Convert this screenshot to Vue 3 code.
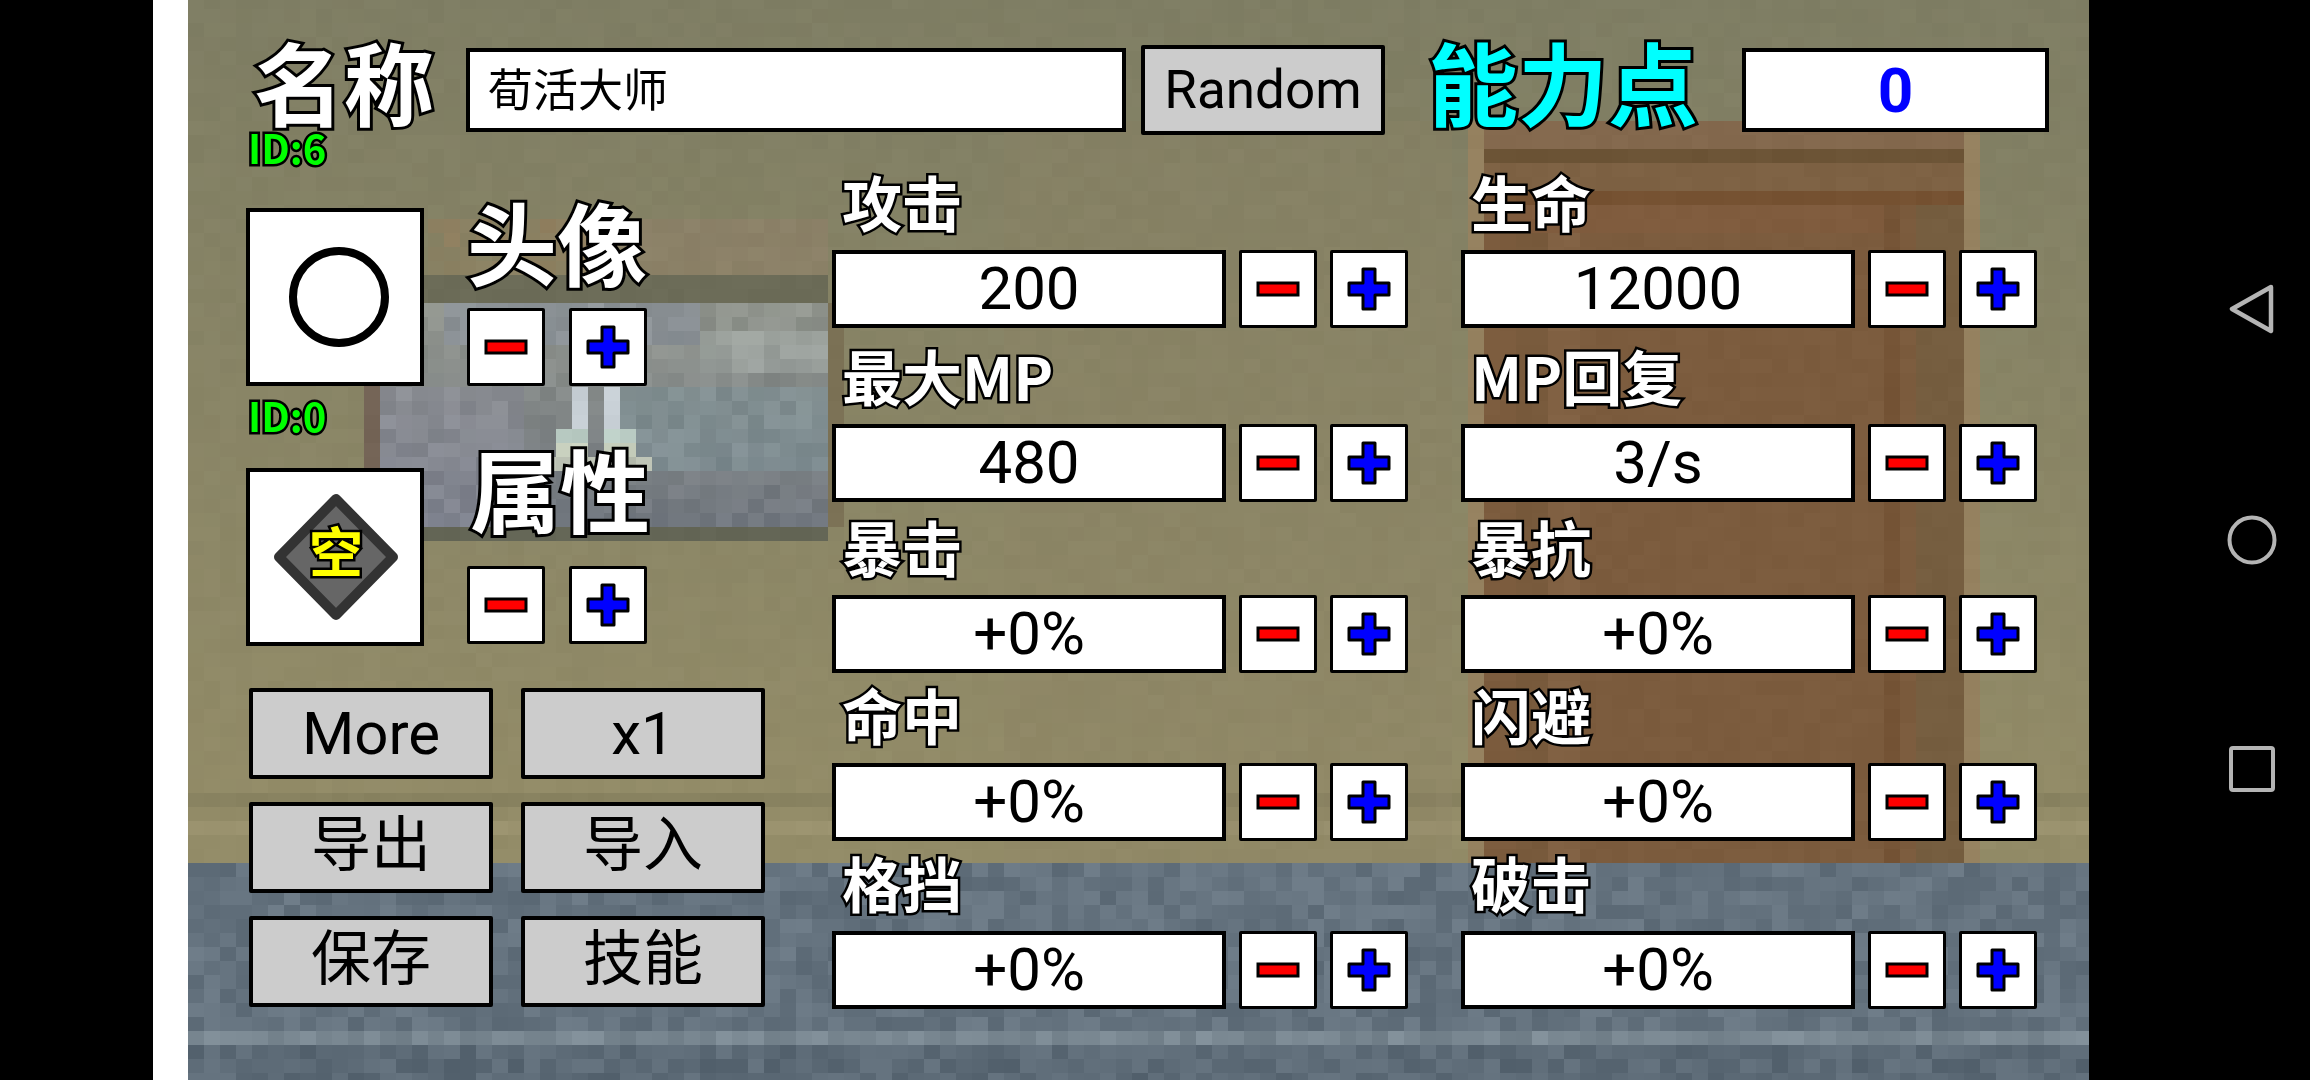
<template>
  <div class="screen">
    <div class="edge-black"></div>
    <div class="edge-white"></div>

    <main class="game">
      <canvas ref="bgCanvas" class="bg" width="119" height="78"></canvas>

      <div class="top-row">
        <div class="title name-title">名称</div>
        <div class="name-input"><span>荀活大师</span></div>
        <button class="gray-btn random-btn">Random</button>
        <div class="title points-title">能力点</div>
        <div class="points-box">0</div>
      </div>

      <div class="body">
        <section class="left">
          <div class="id-tag id-first">ID:6</div>
          <div class="picker">
            <div class="pick-box">
              <span class="avatar-ring"></span>
            </div>
            <div class="pick-side side-avatar">
              <div class="title">头像</div>
              <div class="step-pair">
                <button class="step-btn">
                  <svg viewBox="0 0 44 44" class="step-icon"><rect x="2" y="16" width="40" height="12" fill="#f00" stroke="#000" stroke-width="3" /></svg>
                </button>
                <button class="step-btn">
                  <svg viewBox="0 0 44 44" class="step-icon"><path d="M16 2h12v14h14v12H28v14H16V28H2V16h14z" fill="#00f" stroke="#000" stroke-width="3" stroke-linejoin="round" /></svg>
                </button>
              </div>
            </div>
          </div>

          <div class="id-tag id-second">ID:0</div>
          <div class="picker">
            <div class="pick-box">
              <svg viewBox="0 0 132 132" class="attr-icon">
                <path d="M67 8 124 66 67 124 10 66z" fill="#666" stroke="#333" stroke-width="10" stroke-linejoin="round" />
                <text x="67" y="82" text-anchor="middle" class="attr-text">空</text>
              </svg>
            </div>
            <div class="pick-side side-attr">
              <div class="title">属性</div>
              <div class="step-pair">
                <button class="step-btn">
                  <svg viewBox="0 0 44 44" class="step-icon"><rect x="2" y="16" width="40" height="12" fill="#f00" stroke="#000" stroke-width="3" /></svg>
                </button>
                <button class="step-btn">
                  <svg viewBox="0 0 44 44" class="step-icon"><path d="M16 2h12v14h14v12H28v14H16V28H2V16h14z" fill="#00f" stroke="#000" stroke-width="3" stroke-linejoin="round" /></svg>
                </button>
              </div>
            </div>
          </div>

          <div class="actions">
            <button v-for="a in actions" :key="a.text" :class="['gray-btn', 'action-btn', { cjk: a.cjk }]">{{ a.text }}</button>
          </div>
        </section>

        <section class="stats">
          <div v-for="s in stats" :key="s.label" class="stat">
            <div class="stat-label">{{ s.label }}</div>
            <div class="stat-row">
              <div class="stat-value">{{ s.value }}</div>
              <button class="step-btn">
                <svg viewBox="0 0 44 44" class="step-icon"><rect x="2" y="16" width="40" height="12" fill="#f00" stroke="#000" stroke-width="3" /></svg>
              </button>
              <button class="step-btn">
                <svg viewBox="0 0 44 44" class="step-icon"><path d="M16 2h12v14h14v12H28v14H16V28H2V16h14z" fill="#00f" stroke="#000" stroke-width="3" stroke-linejoin="round" /></svg>
              </button>
            </div>
          </div>
        </section>
      </div>
    </main>

    <nav class="sys-nav">
      <svg viewBox="0 0 50 50" class="nav-icon"><path d="M44 3 5 25l39 22z" fill="none" stroke="#b4b4b4" stroke-width="4.5" stroke-linejoin="round" /></svg>
      <svg viewBox="0 0 50 50" class="nav-icon"><circle cx="25" cy="25" r="22.5" fill="none" stroke="#b4b4b4" stroke-width="4" /></svg>
      <svg viewBox="0 0 50 50" class="nav-icon"><rect x="4" y="2" width="42" height="42" rx="2" fill="none" stroke="#b4b4b4" stroke-width="4" /></svg>
    </nav>
  </div>
</template>

<script setup>
import { onMounted, ref } from "vue";

const actions = [
  { text: "More" },
  { text: "x1" },
  { text: "导出", cjk: true },
  { text: "导入", cjk: true },
  { text: "保存", cjk: true },
  { text: "技能", cjk: true },
];

const stats = [
  { label: "攻击", value: "200" },
  { label: "生命", value: "12000" },
  { label: "最大MP", value: "480" },
  { label: "MP回复", value: "3/s" },
  { label: "暴击", value: "+0%" },
  { label: "暴抗", value: "+0%" },
  { label: "命中", value: "+0%" },
  { label: "闪避", value: "+0%" },
  { label: "格挡", value: "+0%" },
  { label: "破击", value: "+0%" },
];

const bgCanvas = ref(null);

// little repeatable noise, -1..1
function noise(i, j, seed = 0) {
  const n = Math.sin(i * 127.1 + j * 311.7 + seed * 74.7) * 43758.5453;
  return (n - Math.floor(n)) * 2 - 1;
}

function mix(a, b, t) {
  return a.map((v, k) => v + (b[k] - v) * t);
}

function wallColor(x, y) {
  let c = mix([127, 126, 100], [147, 140, 104], Math.min(y / 800, 1));
  if (y > 820 && y < 836) c = [156, 148, 112];
  if (y > 792 && y < 806) c = [136, 130, 96];
  if (x < 1450 && x > 1000 && y > 120) c = mix(c, [140, 130, 100], 0.3);
  return c;
}

function windowColor(x, y) {
  const t = (y - 297) / 229;
  let c = mix([146, 150, 142], [114, 120, 128], t);
  if (x < 520 && y > 380) c = mix(c, [150, 148, 170], 0.3);
  if (x > 620 && y > 380 && y < 470) c = mix(c, [128, 150, 156], 0.5);
  if (y < 350 && x > 440 && x < 700) c = mix(c, [136, 146, 170], 0.35);
  if (y > 330 && y < 370 && x > 700) c = mix(c, [172, 180, 176], 0.45);
  // bright thing in the middle
  if (((x > 570 && x < 590) || (x > 605 && x < 620)) && y > 385 && y < 425) c = [198, 206, 212];
  if (((x > 555 && x < 590) || (x > 605 && x < 640)) && y >= 425 && y < 440) c = [186, 204, 196];
  if (((x > 555 && x < 590) || (x > 605 && x < 640)) && y >= 440 && y < 455) c = [198, 206, 188];
  if (x > 540 && x < 655 && y >= 455 && y < 470) c = [186, 192, 178];
  return c;
}

function doorColor(x, y) {
  if (x < 1484 || x > 1964) return [150, 130, 96];
  let c = [124, 92, 62];
  if (x > 1548 && x < 1580) c = [130, 98, 68];
  if (x > 1516 && x <= 1548) c = [120, 90, 60];
  if (x > 1884 && x < 1900) c = [117, 84, 54];
  if (x > 1920) c = [118, 94, 64];
  if (y < 148) c = [132, 105, 78];
  else if (y < 162) c = [108, 84, 54];
  else if (y < 190) c = [126, 98, 68];
  else if (y < 204) c = [118, 82, 50];
  else if (y < 232 && x > 1500 && x < 1880) c = [128, 92, 62];
  return c;
}

function floorColor(i, j, y) {
  let c = [101, 115, 127];
  if (y > 1034 && y < 1050) c = [122, 136, 146];
  if (y >= 1050) c = [92, 106, 118];
  const n = noise(i, j, 1) * 11;
  return c.map((v) => v + n);
}

function cellColor(i, j) {
  const x = 188 + i * 16 + 8;
  const y = -5 + j * 14 + 7;
  if (y >= 863) return floorColor(i, j, y);

  let c = wallColor(x, y);
  let amt = 2;
  if (x > 1468 && x < 1980 && y > 122) {
    c = doorColor(x, y);
  } else if (x > 365 && x < 830 && y > 278 && y < 540) {
    if (y < 297) c = [108, 108, 88];
    else if (y > 526) c = [100, 102, 86];
    else if (x < 380) c = [116, 100, 86];
    else {
      c = windowColor(x, y);
      amt = 9;
    }
  } else if (x >= 830 && x < 845 && y > 297 && y < 526) {
    c = [124, 114, 86];
  } else if (x > 430 && x < 830 && y > 216 && y <= 278) {
    c = x < 620 ? mix(c, [146, 128, 96], 0.55 + noise(i, j, 3) * 0.4) : mix(c, [150, 128, 108], 0.4);
    amt = 3;
  }
  const n = noise(i, j, 2) * amt;
  return c.map((v) => v + n);
}

onMounted(() => {
  const ctx = bgCanvas.value.getContext("2d");
  for (let j = 0; j < 78; j++) {
    for (let i = 0; i < 119; i++) {
      const [r, g, b] = cellColor(i, j);
      ctx.fillStyle = `rgb(${r | 0},${g | 0},${b | 0})`;
      ctx.fillRect(i, j, 1, 1);
    }
  }
});
</script>

<style scoped>
.screen {
  display: flex;
  width: 2310px;
  height: 1080px;
  overflow: hidden;
  background: #000;
  font-family: Roboto, "Noto Sans CJK SC", sans-serif;
  color: #000;
}

.edge-black {
  width: 153px;
  flex: none;
}

.edge-white {
  width: 35px;
  flex: none;
  background: #fff;
}

.game {
  position: relative;
  width: 1901px;
  flex: none;
  overflow: hidden;
  background: #8a8668;
  padding: 45px 0 0 58px;
  box-sizing: border-box;
}

.bg {
  position: absolute;
  left: 0;
  top: -5px;
  width: 1904px;
  height: 1092px;
  image-rendering: pixelated;
}

.top-row,
.body {
  position: relative;
}

.top-row {
  display: flex;
  align-items: center;
  height: 90px;
}

.title {
  font-family: "Noto Sans CJK SC", sans-serif;
  font-weight: 700;
  font-size: 90px;
  line-height: 88px;
  color: #fff;
  -webkit-text-stroke: 6px #000;
  paint-order: stroke fill;
  white-space: nowrap;
}

.name-title {
  width: 220px;
  padding-left: 8px;
  box-sizing: border-box;
  margin-top: -20px;
}

.name-input {
  width: 660px;
  height: 84px;
  box-sizing: border-box;
  border: 4px solid #000;
  background: #fff;
  display: flex;
  align-items: center;
  padding-left: 18px;
  font-size: 45px;
}

.name-input span {
  margin-top: -6px;
}

.gray-btn {
  background: #ccc;
  border: 4px solid #000;
  border-radius: 2px;
  box-sizing: border-box;
  padding: 0;
  color: #000;
  font-family: inherit;
}

.random-btn {
  width: 244px;
  height: 90px;
  margin-left: 15px;
  font-size: 53px;
}

.points-title {
  color: #0ff;
  margin-left: 43px;
  width: 314px;
  margin-top: -20px;
}

.points-box {
  width: 307px;
  height: 84px;
  box-sizing: border-box;
  border: 4px solid #000;
  background: #fff;
  color: #00f;
  font-weight: 700;
  font-size: 62px;
  display: flex;
  align-items: center;
  justify-content: center;
}

.body {
  display: flex;
  gap: 67px;
}

.left {
  width: 519px;
  flex: none;
}

.id-tag {
  font-family: "Noto Sans CJK SC", sans-serif;
  font-weight: 700;
  font-size: 40px;
  line-height: 36px;
  color: #0f0;
  -webkit-text-stroke: 5px #000;
  paint-order: stroke fill;
  height: 36px;
  padding-left: 2px;
}

.id-first {
  margin-top: -6px;
  margin-bottom: 43px;
}

.id-second {
  margin-top: 11px;
  margin-bottom: 35px;
}

.picker {
  display: flex;
  gap: 43px;
  height: 178px;
}

.pick-box {
  width: 178px;
  height: 178px;
  flex: none;
  box-sizing: border-box;
  border: 4px solid #000;
  background: #fff;
  display: flex;
  align-items: center;
  justify-content: center;
}

.avatar-ring {
  width: 100px;
  height: 100px;
  box-sizing: border-box;
  border: 8px solid #000;
  border-radius: 50%;
  margin-left: 7px;
}

.attr-icon {
  width: 132px;
  height: 132px;
}

.attr-text {
  font-family: "Noto Sans CJK SC", sans-serif;
  font-weight: 700;
  font-size: 54px;
  fill: #ff0;
  stroke: #000;
  stroke-width: 5px;
  paint-order: stroke fill;
}

.side-avatar {
  margin-top: -12px;
}

.side-avatar .title {
  margin-bottom: 24px;
}

.side-attr {
  margin-top: -25px;
}

.side-attr .title {
  margin-bottom: 35px;
  margin-left: 3px;
}

.step-pair {
  display: flex;
  gap: 24px;
}

.step-btn {
  width: 78px;
  height: 78px;
  flex: none;
  box-sizing: border-box;
  border: 3px solid #000;
  border-radius: 2px;
  background: #fff;
  padding: 0;
  display: flex;
  align-items: center;
  justify-content: center;
}

.step-icon {
  width: 44px;
  height: 44px;
}

.actions {
  margin-top: 42px;
  margin-left: 3px;
  display: grid;
  grid-template-columns: 244px 244px;
  grid-auto-rows: 91px;
  column-gap: 28px;
  row-gap: 23px;
}

.action-btn {
  font-size: 60px;
  line-height: 70px;
}

.action-btn.cjk {
  padding-bottom: 4px;
}

.stats {
  display: grid;
  grid-template-columns: 576px 576px;
  grid-template-rows: 193px 174px 171px 168px 168px;
  column-gap: 53px;
  align-items: end;
}

.stat-label {
  font-family: "Noto Sans CJK SC", sans-serif;
  font-weight: 700;
  font-size: 60px;
  line-height: 58px;
  height: 78px;
  color: #fff;
  -webkit-text-stroke: 5px #000;
  paint-order: stroke fill;
  padding-left: 10px;
  white-space: nowrap;
}

.stat-row {
  display: flex;
  gap: 13px;
}

.stat-value {
  width: 395px;
  height: 78px;
  box-sizing: border-box;
  border: 4px solid #000;
  background: #fff;
  font-size: 60px;
  padding-bottom: 2px;
  display: flex;
  align-items: center;
  justify-content: center;
}

.sys-nav {
  flex: none;
  width: 221px;
  box-sizing: border-box;
  padding: 284px 0 0 138px;
  display: flex;
  flex-direction: column;
  gap: 181px;
}

.nav-icon {
  width: 50px;
  height: 50px;
}
</style>

<style>
body {
  background: #000;
  overflow: hidden;
}
</style>
